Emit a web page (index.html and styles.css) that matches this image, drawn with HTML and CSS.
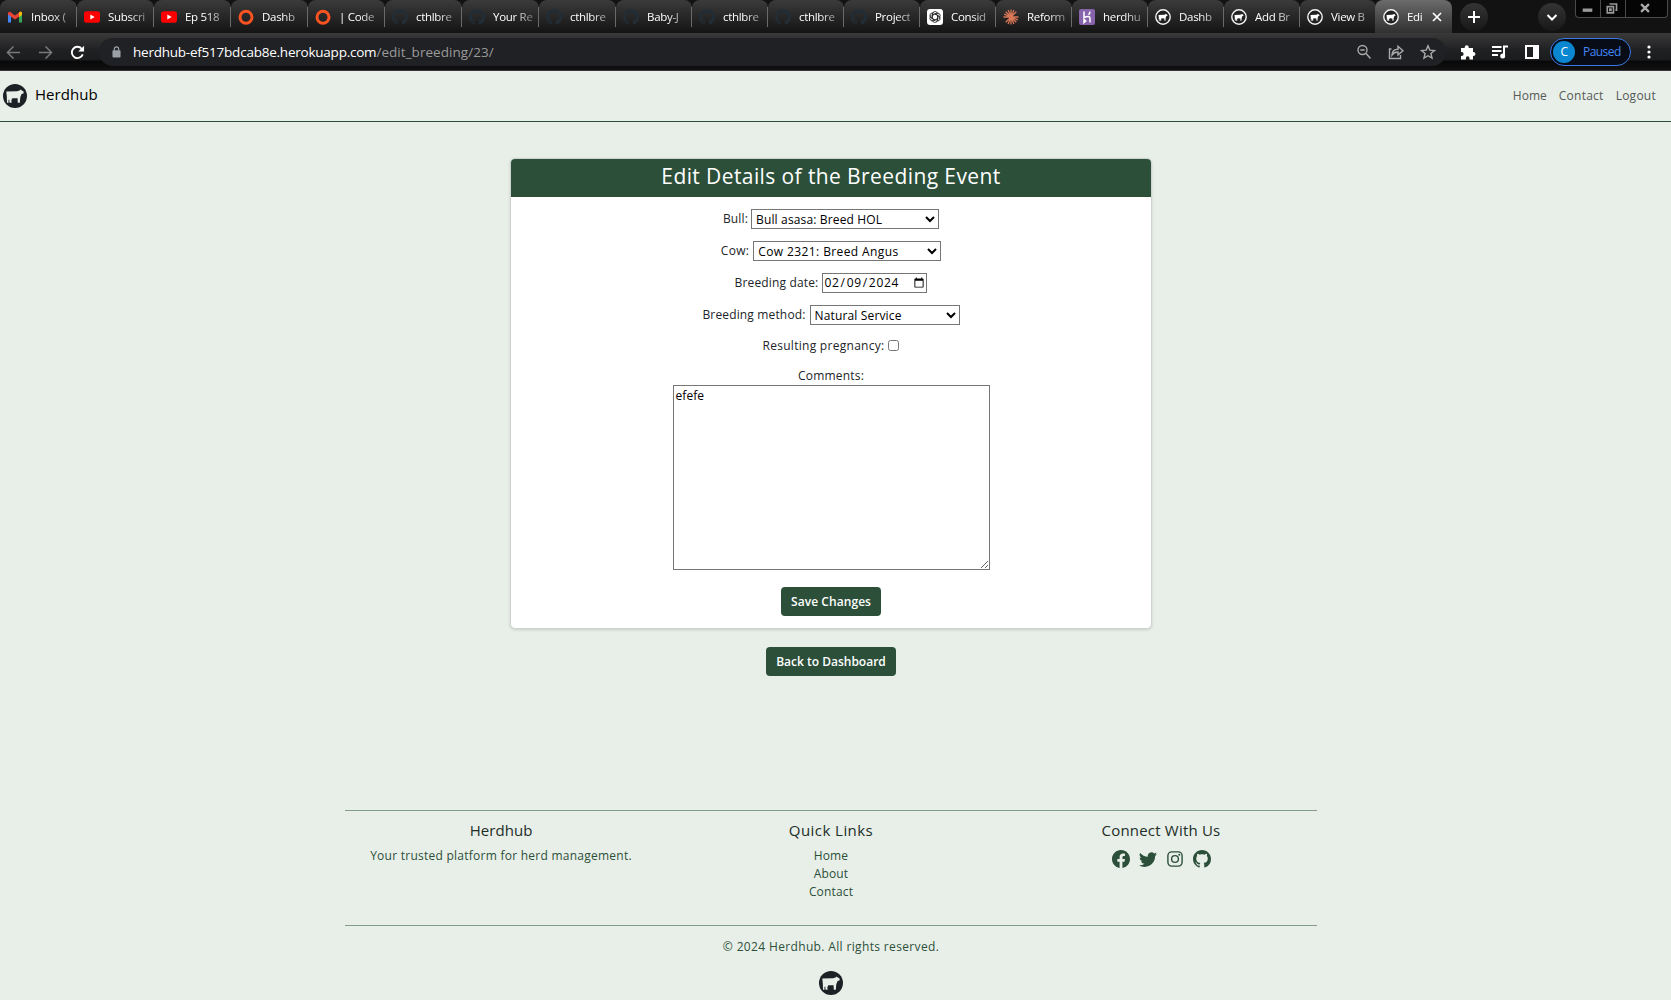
FILE: index.html
```html
<!DOCTYPE html>
<html lang="en">
<head>
<meta charset="utf-8">
<title>Herdhub</title>
<link rel="stylesheet" href="styles.css">
</head>
<body>
<svg class="defs" aria-hidden="true">
  <symbol id="cow" viewBox="0 0 24 24"><path d="M3.3 7.6 14.2 7.3 17 6.2 17.6 5.4 18.4 6.3 20.3 7.2 20.8 9.3 18.6 9.9 17.3 13.2 16.8 18.8 14.8 18.8 14.6 14.3 9.4 14.2 8.4 16 8.6 18.8 6.6 18.8 6.2 15.4 5.4 16 5.6 18.8 4 18.8 3.8 12.5Z"/></symbol>
  <symbol id="cowlogo" viewBox="0 0 24 24"><circle cx="12" cy="12" r="12" fill="#1d2025"/><use href="#cow" width="24" height="24" fill="#e8eee8"/></symbol>
  <symbol id="cowtab" viewBox="0 0 16 16"><circle cx="8" cy="8" r="7.2" fill="#222" stroke="#f4f4f4" stroke-width="1.4"/><use href="#cow" x="1.8" y="2" width="12.4" height="12.4" fill="#fff"/></symbol>
  <symbol id="github" viewBox="0 0 16 16"><path d="M8 0C3.58 0 0 3.58 0 8c0 3.54 2.29 6.53 5.47 7.59.4.07.55-.17.55-.38 0-.19-.01-.82-.01-1.49-2.01.37-2.53-.49-2.69-.94-.09-.23-.48-.94-.82-1.13-.28-.15-.68-.52-.01-.53.63-.01 1.08.58 1.23.82.72 1.21 1.87.87 2.33.66.07-.52.28-.87.51-1.07-1.78-.2-3.64-.89-3.64-3.95 0-.87.31-1.59.82-2.15-.08-.2-.36-1.02.08-2.12 0 0 .67-.21 2.2.82.64-.18 1.32-.27 2-.27s1.36.09 2 .27c1.53-1.04 2.2-.82 2.2-.82.44 1.1.16 1.92.08 2.12.51.56.82 1.27.82 2.15 0 3.07-1.87 3.75-3.65 3.95.29.25.54.73.54 1.48 0 1.07-.01 1.93-.01 2.2 0 .21.15.46.55.38A8.01 8.01 0 0 0 16 8c0-4.42-3.58-8-8-8"/></symbol>
  <symbol id="youtube" viewBox="0 0 16 16"><rect y="2.3" width="16" height="11.4" rx="2.8" fill="#f00"/><path d="M6.3 5.5v5L10.7 8z" fill="#fff"/></symbol>
  <symbol id="ring" viewBox="0 0 16 16"><circle cx="8" cy="8.300" r="6" fill="none" stroke="#fb5321" stroke-width="3"/></symbol>
  <symbol id="gmail" viewBox="0 0 16 16"><path d="M1 4v9.5h3V7z" fill="#4285f4"/><path d="M15 4v9.5h-3V7z" fill="#34a853"/><path d="M1 3.5 3 2.7 8 6.6 13 2.7 15 3.5V5.4L8 10.5 1 5.4z" fill="#ea4335"/><path d="M12 3.5 13.5 2.5Q15 2.7 15 4v2l-3 2z" fill="#fbbc04"/></symbol>
  <symbol id="gpt" viewBox="0 0 16 16"><rect width="16" height="16" rx="3" fill="#fff"/><g fill="none" stroke="#222" stroke-width=".8"><path id="petal" d="M5.300 9.600V5.200a2.700 2.700 0 0 1 5-1.400M5.300 6.400 8.400 4.600a2.700 2.700 0 0 1 3.200.4"/><use href="#petal" transform="rotate(60 8 8)"/><use href="#petal" transform="rotate(120 8 8)"/><use href="#petal" transform="rotate(180 8 8)"/><use href="#petal" transform="rotate(240 8 8)"/><use href="#petal" transform="rotate(300 8 8)"/></g></symbol>
  <symbol id="burst" viewBox="0 0 16 16"><path d="M8 .5v15M.5 8h15M2.7 2.7l10.6 10.6M13.3 2.7 2.7 13.3M5.1 1.1l5.8 13.8M10.9 1.1 5.1 14.9M1.1 5.1l13.8 5.8" stroke="#d97757" stroke-width="1.3"/></symbol>
  <symbol id="heroku" viewBox="0 0 16 16"><rect width="16" height="16" rx="2" fill="#8663ab"/><path d="M5 2.5v6q6-2.4 6 1v4M5 10.5v3l1.7-1.5zM11 2.5q0 2-1.5 3.2" fill="none" stroke="#fff" stroke-width="1.5"/></symbol>
</svg>

<header class="browser">
  <div class="tabstrip">
    <div class="tab"><svg><use href="#gmail"/></svg><span>Inbox (</span></div>
    <div class="tab"><svg><use href="#youtube"/></svg><span>Subscri</span></div>
    <div class="tab"><svg><use href="#youtube"/></svg><span>Ep 518</span></div>
    <div class="tab"><svg><use href="#ring"/></svg><span>Dashb</span></div>
    <div class="tab"><svg><use href="#ring"/></svg><span>| Code</span></div>
    <div class="tab gh"><svg><use href="#github"/></svg><span>cthlbre</span></div>
    <div class="tab gh"><svg><use href="#github"/></svg><span>Your Re</span></div>
    <div class="tab gh"><svg><use href="#github"/></svg><span>cthlbre</span></div>
    <div class="tab gh narrow"><svg><use href="#github"/></svg><span>Baby-J</span></div>
    <div class="tab gh narrow"><svg><use href="#github"/></svg><span>cthlbre</span></div>
    <div class="tab gh narrow"><svg><use href="#github"/></svg><span>cthlbre</span></div>
    <div class="tab gh narrow"><svg><use href="#github"/></svg><span>Project</span></div>
    <div class="tab narrow"><svg><use href="#gpt"/></svg><span>Consid</span></div>
    <div class="tab narrow"><svg><use href="#burst"/></svg><span>Reform</span></div>
    <div class="tab narrow"><svg><use href="#heroku"/></svg><span>herdhu</span></div>
    <div class="tab narrow"><svg><use href="#cowtab"/></svg><span>Dashb</span></div>
    <div class="tab narrow"><svg><use href="#cowtab"/></svg><span>Add Br</span></div>
    <div class="tab narrow last"><svg><use href="#cowtab"/></svg><span>View B</span></div>
    <div class="tab active"><svg><use href="#cowtab"/></svg><span>Edi</span><svg class="x" viewBox="0 0 10 10"><path d="M1 1l8 8M9 1 1 9"/></svg></div>
    <div class="round plus"><svg viewBox="0 0 14 14"><path d="M7 1v12M1 7h12"/></svg></div>
    <div class="round more"><svg viewBox="0 0 14 14"><path d="m2.5 5 4.5 4.5L11.500 5"/></svg></div>
    <div class="window">
      <svg class="w1" viewBox="0 0 25 17"><rect x="7" y="8.500" width="10" height="3.500" fill="#999"/></svg>
      <svg class="w1" viewBox="0 0 25 17"><path d="M9.500 4V3.800h6.700v6.400H15M6.500 6.500h6.500v6.500H6.500zM9.200 9.200h1.200v1.200H9.200z" fill="none" stroke="#999" stroke-width="1.700"/></svg>
      <svg class="w2" viewBox="0 0 42 17"><path d="m15.500 4 8 8M23.500 4l-8 8" stroke="#aaa" stroke-width="2.300"/></svg>
    </div>
  </div>
  <div class="toolbar">
    <svg class="nav dim" viewBox="0 0 16 16"><path d="M15 8H2M8 1.500 1.500 8 8 14.500"/></svg>
    <svg class="nav dim" viewBox="0 0 16 16"><path d="M1 8h13M8 1.500 14.500 8 8 14.500"/></svg>
    <svg class="nav" viewBox="0 0 16 16"><path d="M13.600 10A6 6 0 1 1 12.500 4L14 5.700"/><path d="M15 .8v6.200H8.800z" class="solid"/></svg>
    <div class="omnibox">
      <svg class="lock" viewBox="0 0 10 13"><rect x=".5" y="4.500" width="9" height="8" rx="1" fill="#9aa0a6"/><path d="M2.600 5V3.200a2.400 2.400 0 0 1 4.800 0V5" fill="none" stroke="#9aa0a6" stroke-width="1.300"/></svg>
      <span class="host">herdhub-ef517bdcab8e.herokuapp.com</span><span class="path">/edit_breeding/23/</span>
      <div class="tools">
        <svg viewBox="0 0 16 16"><circle cx="6.500" cy="6" r="4.500"/><path d="m10 9.500 4.500 5M4.300 6h4.400"/></svg>
        <svg viewBox="0 0 16 16"><path d="M3.500 5H1.500v9.500h11V11M4 11c.3-4 2.500-5.700 6-5.700V2.200L15 6.700l-5 4.200V8C7.300 8 5.500 8.800 4 11z"/></svg>
        <svg viewBox="0 0 16 16"><path d="m8 1.800 1.800 4.300 4.700.4-3.600 3 1.100 4.600L8 11.700 4 14.100l1.100-4.600-3.600-3 4.700-.4z"/></svg>
      </div>
    </div>
    <div class="ext">
      <svg viewBox="0 0 16 16"><path class="f" d="M1 4h3.700V3.300a2 2 0 0 1 4 0V4H13v4h.4a2 2 0 0 1 0 4H13v3.500H9.500V14a1.800 1.800 0 0 0-3.600 0v1.500H1V12h.6a2 2 0 0 0 0-4H1z"/></svg>
      <svg viewBox="0 0 16 16"><path d="M0 3h9.500M0 7h9.500M0 11h6M12 11V2.500h4" stroke-width="2"/><circle class="f" cx="10.700" cy="12" r="2.500"/></svg>
      <svg viewBox="0 0 16 16"><path class="f" fill-rule="evenodd" d="M1 1h14v14H1zM3 3v10h6V3z"/></svg>
    </div>
    <div class="profile"><b>C</b><span>Paused</span></div>
    <svg class="dots" viewBox="0 0 4 14"><circle cx="2" cy="2" r="1.600"/><circle cx="2" cy="7" r="1.600"/><circle cx="2" cy="12" r="1.600"/></svg>
  </div>
</header>

<nav class="site-nav">
  <a class="brand"><svg class="logo"><use href="#cowlogo"/></svg><span>Herdhub</span></a>
  <div class="links"><a class="l1">Home</a><a class="l2">Contact</a><a class="l3">Logout</a></div>
</nav>

<main>
  <section class="card">
    <h1>Edit Details of the Breeding Event</h1>
    <form>
      <div class="row"><label class="bull">Bull:</label><select class="wide animal1"><option>Bull asasa: Breed HOL</option></select></div>
      <div class="row"><label class="cow">Cow:</label><select class="wide animal2"><option>Cow 2321: Breed Angus</option></select></div>
      <div class="row"><label>Breeding date:</label><input class="date" type="date" value="2024-02-09"></div>
      <div class="row"><label>Breeding method:</label><select class="method"><option>Natural Service</option></select></div>
      <div class="row check"><label class="preg">Resulting pregnancy:</label><input type="checkbox"></div>
      <label class="comments">Comments:</label>
      <textarea>efefe</textarea>
      <button type="button" class="btn save">Save Changes</button>
    </form>
  </section>
  <button type="button" class="btn back">Back to Dashboard</button>
</main>

<footer>
  <div class="columns">
    <div><h2>Herdhub</h2><p class="tag">Your trusted platform for herd management.</p></div>
    <div><h2 class="ql">Quick Links</h2><a>Home</a><a>About</a><a>Contact</a></div>
    <div><h2 class="cw">Connect With Us</h2>
      <div class="social">
        <svg viewBox="0 0 16 16"><path d="M16 8.049c0-4.446-3.582-8.050-8-8.050C3.580 0-.002 3.603-.002 8.050c0 4.017 2.926 7.347 6.750 7.951v-5.625h-2.030V8.050H6.750V6.275c0-2.017 1.195-3.131 3.022-3.131.876 0 1.791.157 1.791.157v1.980h-1.009c-.993 0-1.303.621-1.303 1.258v1.510h2.218l-.354 2.326H9.250V16c3.824-.604 6.750-3.934 6.750-7.951"/></svg>
        <svg viewBox="0 0 16 16"><path d="M5.026 15c6.038 0 9.341-5.003 9.341-9.334q.002-.211-.006-.422A6.700 6.700 0 0 0 16 3.542a6.700 6.700 0 0 1-1.889.518 3.300 3.300 0 0 0 1.447-1.817 6.500 6.500 0 0 1-2.087.793A3.286 3.286 0 0 0 7.875 6.030a9.320 9.320 0 0 1-6.767-3.429 3.290 3.290 0 0 0 1.018 4.382A3.300 3.300 0 0 1 .64 6.575v.045a3.290 3.290 0 0 0 2.632 3.218 3.200 3.200 0 0 1-.865.115 3 3 0 0 1-.614-.057 3.280 3.280 0 0 0 3.067 2.277A6.600 6.600 0 0 1 .78 13.580a6 6 0 0 1-.78-.045A9.340 9.340 0 0 0 5.026 15"/></svg>
        <svg class="insta" viewBox="0 0 16 16"><g fill="none" stroke="#2c4f3a" stroke-width="1.400"><rect x=".9" y=".9" width="14.200" height="14.200" rx="3.800"/><circle cx="8" cy="8" r="3.400"/></g><circle cx="12.300" cy="3.700" r="1"/></svg>
        <svg viewBox="0 0 16 16"><use href="#github"/></svg>
      </div>
    </div>
  </div>
  <p class="copy">© 2024 Herdhub. All rights reserved.</p>
  <svg class="logo"><use href="#cowlogo"/></svg>
</footer>
</body>
</html>
```
FILE: styles.css
```css
* { box-sizing: border-box; }
body {
  margin: 0;
  height: 1000px;
  overflow: hidden;
  background: #e8efe8;
  color: #212529;
  font: 12px/18px "Open Sans", "Noto Sans", sans-serif;
  letter-spacing: .15px;
}
svg { display: block; flex: none; }
.defs { position: absolute; width: 0; height: 0; }
h1, h2, p { margin: 0; font-weight: 400; }

/* browser frame */
.browser { height: 71px; background: #121212; border-bottom: 1px solid #39353a; }
.tabstrip { display: flex; height: 33px; background: #121212; }
.tab {
  position: relative;
  display: flex;
  align-items: center;
  width: 77px;
  height: 33px;
  padding: 1px 4px 0 7px;
  border-radius: 8px 8px 0 0;
  background: linear-gradient(#3b3b3b, #272727 50%, #141414);
  color: #fff;
  font-size: 11.5px;
  letter-spacing: -.3px;
}
.tab svg { width: 16px; height: 16px; }
.tab span {
  margin-left: 8px;
  white-space: nowrap;
  -webkit-mask-image: linear-gradient(90deg, #000 20px, rgba(0,0,0,.25) 42px);
}
.tab::after { content: ""; position: absolute; right: 0; top: 7px; width: 1px; height: 20px; background: #6a6a6a; }
.tab.narrow { width: 76px; }
.tab.gh > svg { fill: #222d36; }
.tab.last::after, .tab.active::after { display: none; }
.tab.active { width: 77px; margin-left: -1px; padding-left: 8px; background: linear-gradient(#6b6b6b, #4d4d4d 50%, #303030); }
.tab.active span { flex: none; width: 18px; }
.tab.active .x { width: 10px; height: 10px; margin-left: 7px; stroke: #fff; stroke-width: 1.7; }
.round { display: flex; align-items: center; justify-content: center; width: 28px; height: 28px; margin-top: 3px; border-radius: 50%; background: linear-gradient(#343434, #181818); }
.round svg { width: 14px; height: 14px; fill: none; stroke: #fff; stroke-width: 2; }
.plus { margin-left: 8px; }
.more { margin-left: 50px; }
.window { display: flex; width: 93px; height: 18px; margin-left: 9px; border: 1px solid #4a4a4a; border-top: 0; border-radius: 0 0 4px 4px; background: #050505; }
.window svg { height: 17px; border-right: 1px solid #4a4a4a; }
.window svg.w1 { width: 25px; }
.window svg.w2 { width: 41px; border: 0; }
.toolbar { display: flex; align-items: center; height: 37px; padding: 1px 0 0 6px; background: linear-gradient(#3a3a3a, #202123 45%, #1b1c1e 73%, #080808 76%, #111); }
.nav { width: 15px; height: 15px; margin-right: 17px; fill: none; stroke: #fff; stroke-width: 2; }
.nav.dim { stroke: #7a7a7a; stroke-width: 1.6; }
.nav .solid { fill: #fff; stroke: none; }
.omnibox { display: flex; align-items: center; width: 1347px; height: 28px; margin-left: -3px; padding: 0 10px 0 13px; border-radius: 14px; background: #202124; color: #fff; font-size: 13.5px; letter-spacing: -.23px; }
.lock { width: 9px; height: 12px; margin-right: 12px; }
.path { color: #9a9a9a; letter-spacing: .05px; }
.tools { display: flex; gap: 16px; margin-left: auto; }
.tools svg { width: 16px; height: 16px; fill: none; stroke: #aaa; stroke-width: 1.4; }
.ext { display: flex; gap: 16px; margin-left: 14px; }
.ext svg { width: 16px; height: 16px; fill: none; stroke: #fff; }
.ext .f { fill: #fff; stroke: none; }
.profile { display: flex; align-items: center; width: 81px; height: 28px; margin-left: 10px; padding-left: 2px; border: 1px solid #3b78e7; border-radius: 14px; background: #070c16; color: #4287f5; letter-spacing: -.55px; }
.profile b { width: 22px; height: 22px; margin-right: 8px; border-radius: 50%; background: #0a87d0; color: #fff; font-weight: 400; line-height: 22px; text-align: center; }
.dots { width: 4px; height: 14px; margin-left: 16px; fill: #fff; }

/* page header */
.site-nav { display: flex; justify-content: space-between; align-items: center; height: 51px; padding: 0 15px 0 3px; border-bottom: 1px solid #2c4f3a; }
.brand { display: flex; align-items: center; gap: 8px; color: #000; font-size: 15px; letter-spacing: .05px; }
.brand span { margin-top: -4px; }
.logo { width: 24px; height: 24px; }
.links { display: flex; gap: 12px; color: #555a57; }
.l1 { letter-spacing: 0; }
.l2, .l3 { letter-spacing: .25px; }

/* form card */
main { display: flex; flex-direction: column; align-items: center; width: 1662px; height: 688px; padding-top: 36px; }
.card { width: 642px; height: 471px; border: 1px solid #cdd3ce; border-radius: 5px; background: #fff; box-shadow: 0 1px 3px rgba(0,0,0,.14); overflow: hidden; }
h1 { height: 38px; background: #2c4f3a; color: #fff; font-size: 21px; line-height: 35px; letter-spacing: .4px; text-align: center; }
form { display: flex; flex-direction: column; align-items: center; padding-top: 12px; }
.row { display: flex; align-items: center; gap: 4px; height: 20px; margin-bottom: 12px; }
.bull { margin-right: -1px; }
.cow { letter-spacing: .3px; }
.preg { letter-spacing: .28px; }
select, input.date, textarea { margin: 0; border: 1px solid #767676; border-radius: 0; background: #fff; color: #000; font: 12px "Open Sans", sans-serif; letter-spacing: .15px; }
select { height: 20px; padding: 0 0 1px; }
.wide { width: 188px; }
.animal2 { letter-spacing: .4px; }
.method { width: 150px; }
input.date { width: 105px; height: 20px; padding: 0 1px 1px 0; letter-spacing: .7px; }
input.date::-webkit-calendar-picker-indicator { width: 12px; height: 12px; padding: 0; margin-left: 0; }
.check { height: 18px; }
.check input { width: 11px; height: 11px; margin: 0 0 2px; }
.comments { letter-spacing: .2px; }
textarea { width: 317px; height: 185px; padding: 1px 2px; line-height: 18px; letter-spacing: .05px; resize: both; }
.btn { height: 29px; padding: 0 0 1px; border: 0; border-radius: 4px; background: #2c4f3a; color: #fff; font: 600 12px "Open Sans", sans-serif; }
.save { width: 100px; margin-top: 17px; letter-spacing: .07px; }
.back { width: 130px; margin-top: 18px; letter-spacing: 0; }

/* page footer */
footer { display: flex; flex-direction: column; align-items: center; width: 1662px; color: #2c4f3a; }
.columns { display: grid; grid-template-columns: 312px 348px 312px; width: 972px; height: 116px; padding-top: 10px; border: 1px solid #849c8c; border-width: 1px 0; text-align: center; }
.columns a { display: block; }
h2 { height: 26px; color: #212e28; font-size: 15px; line-height: 18px; letter-spacing: .05px; }
.ql { letter-spacing: .45px; }
.cw { letter-spacing: .2px; }
.tag { letter-spacing: .25px; }
.social { display: flex; justify-content: center; gap: 9px; padding-top: 3px; }
.social svg { width: 18px; height: 18px; fill: #2c4f3a; }
.social .insta { width: 16px; height: 16px; margin: 1px; }
.copy { margin: 12px 0 15px; letter-spacing: .35px; }
```
